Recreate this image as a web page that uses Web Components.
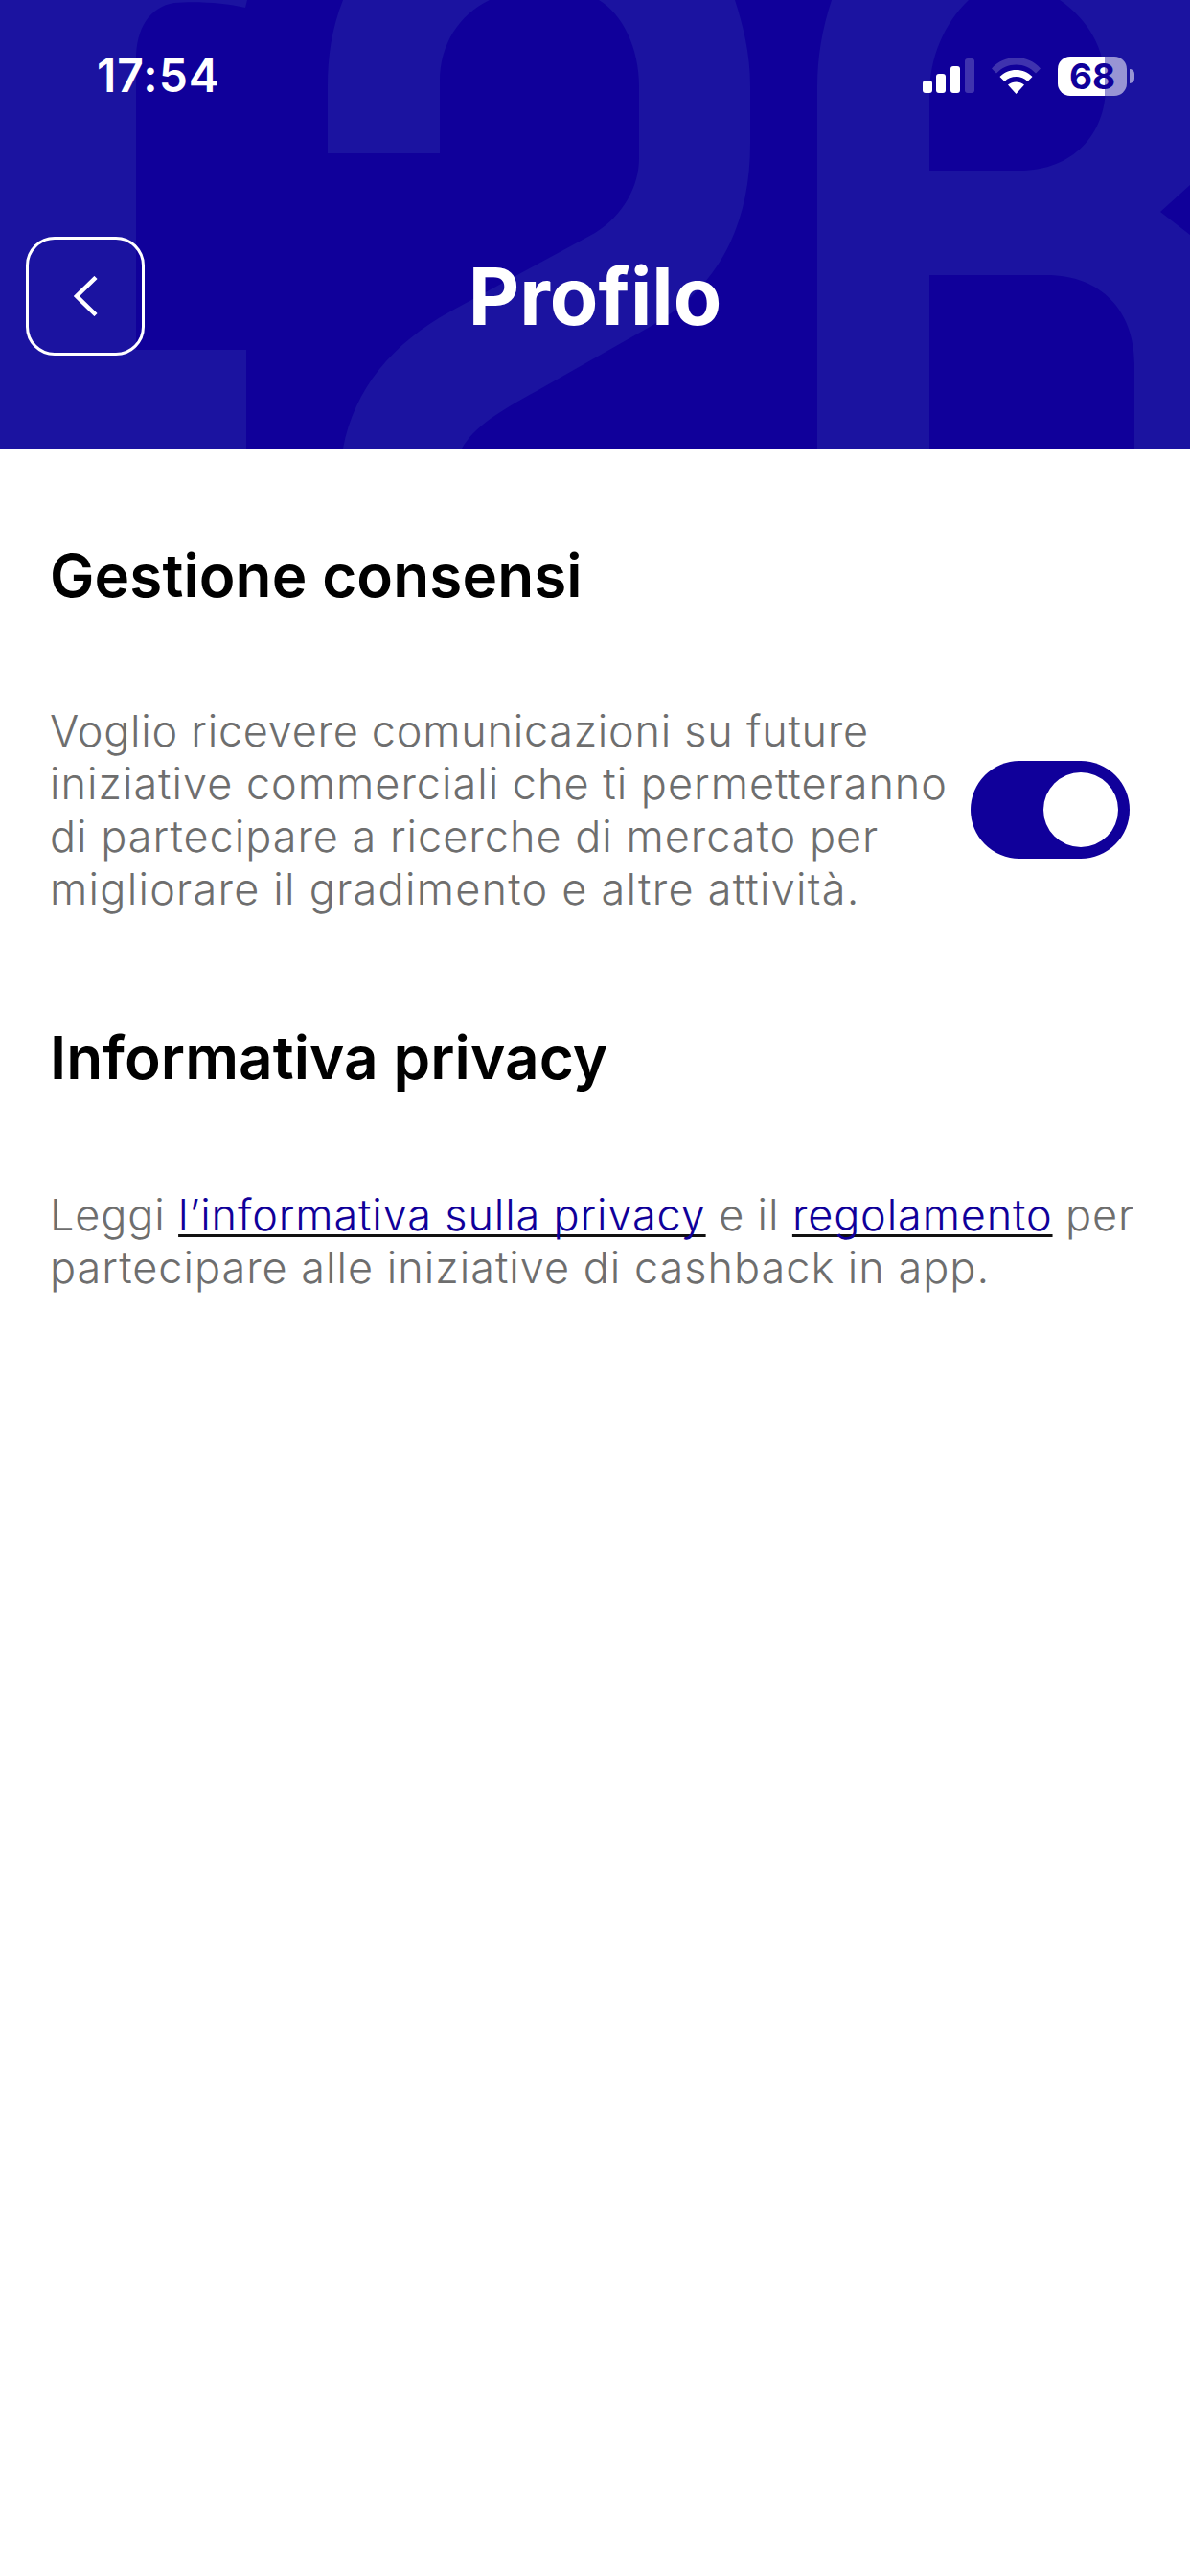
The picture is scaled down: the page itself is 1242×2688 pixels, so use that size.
<!DOCTYPE html>
<html lang="it"><head><meta charset="utf-8"><title>Profilo</title>
<style>
html,body{margin:0;padding:0;background:#fff}
body{font-family:Inter,"Noto Sans",sans-serif;width:1242px;min-height:2688px}
</style></head><body>
<profile-page></profile-page>
<template id="t-status">
<style>
:host{display:flex;align-items:center;justify-content:space-between;height:40px;padding:59px 58px 0 101px;color:#fff}
.time{font:600 48px/40px Inter,sans-serif;letter-spacing:1px}
.icons{display:flex;align-items:center;gap:18px}
svg{display:block}
.batt{position:relative;width:72px;height:41px;border-radius:13px;background:linear-gradient(90deg,#fff 0 49px,rgba(255,255,255,.55) 49px);color:#10009a;font:700 37px/41px Inter,sans-serif;text-align:center;margin-right:8px}
.batt::after{content:"";position:absolute;left:75px;top:13px;width:5px;height:15px;border-radius:0 8px 8px 0;background:rgba(255,255,255,.55)}
</style>
<span class="time">17:54</span>
<span class="icons">
<svg width="54" height="36" viewBox="0 0 54 36" fill="#fff"><rect x="0" y="23" width="10" height="13" rx="3"/><rect x="14" y="16" width="10" height="20" rx="3"/><rect x="29" y="8" width="10" height="28" rx="3"/><rect x="44" y="0" width="10" height="36" rx="3" opacity=".2"/></svg>
<svg width="51" height="38" viewBox="0 0 51 38" fill="#fff"><path opacity=".2" d="M0 11.500C6.500 4 15.500 0 25.500 0S44.500 4 51 11.500L46 16.500C40.500 10.500 33.500 7.500 25.500 7.500S10.500 10.500 5 16.500Z"/><path d="M8.500 20C13 15.500 19 13 25.500 13S38 15.500 42.500 20L37.500 25C34.500 21.800 30 20 25.500 20S16.500 21.800 13.500 25Z"/><path d="M17 28.500C19.500 26.500 22.500 25.500 25.500 25.500S31.500 26.500 34 28.500L25.500 38Z"/></svg>
<span class="batt">68</span>
</span>
</template>
<template id="t-header">
<style>
:host{display:block;position:relative;height:468px;background:#10009a;overflow:hidden}
.bg{position:absolute;inset:0}
.bar{position:relative;display:flex;align-items:center;justify-content:center;height:124px;margin-top:148px;padding:0 27px}
h1{margin:0;font:700 82.500px/124px Inter,sans-serif;color:#fff;letter-spacing:0}
</style>
<svg class="bg" width="1242" height="468" viewBox="0 0 1242 468" fill="#1b13a0">
<path d="M0 0H258L256 8C235 3 205 1 182 3C156 7 142 30 142 62V365H257V468H0Z"/>
<path d="M358 0C346 30 342 60 342 90V160H459V85C459 45 480 15 511 0H625C650 15 667 50 667 90V165C667 195 650 225 621 243L470 325C410 358 370 405 358 468H482C495 445 520 430 560 408L680 340C750 300 783 235 783 150V90C783 55 775 25 767 0Z"/>
<path d="M868 0C858 30 853 60 853 90V468H970V287H1092C1150 287 1184 325 1184 380V468H1242V245L1211 221L1242 193V0H1106C1135 20 1154 50 1154 90C1154 140 1120 178 1064 178H970V100C970 60 985 25 1011 0Z"/>
</svg>
<status-bar style="position:relative"></status-bar>
<div class="bar"><slot name="back"></slot><h1><slot></slot></h1></div>
</template>
<template id="t-back">
<style>
:host{display:block;position:absolute;left:27px;top:0;width:124px;height:124px;box-sizing:border-box;border:3px solid #fff;border-radius:30px}
svg{display:block;position:absolute;left:47px;top:38px}
</style>
<svg width="25" height="42" viewBox="0 0 25 42" fill="none" stroke="#fff" stroke-width="4.500"><path d="M23 1.500L3 21L23 40.500"/></svg>
</template>
<template id="t-section">
<style>
:host{display:block;padding:0 52px}
h2{margin:0;font:600 62px/72px Inter,sans-serif;color:#000;letter-spacing:.1px}
</style>
<h2><slot name="title"></slot></h2>
<slot></slot>
</template>
<template id="t-toggle">
<style>
:host{display:flex;flex:none;justify-content:flex-end;align-items:center;box-sizing:border-box;width:166px;height:102px;padding-right:12px;border-radius:51px;background:#10009a}
i{display:block;width:78px;height:78px;border-radius:50%;background:#fff}
</style>
<i></i>
</template>
<template id="t-text">
<style>
:host{display:block;font:300 45px/55px Inter,sans-serif;color:#6e6e6e;letter-spacing:1px}
</style>
<slot></slot>
</template>
<template id="t-page">
<style>
:host{display:block}
main{display:flex;flex-direction:column}
profile-section.one{margin-top:97px}
profile-section.two{margin-top:113px}
.row{display:flex;align-items:center;justify-content:space-between;margin-top:98px;margin-right:11px;gap:10px}
.row>body-text{width:950px;white-space:nowrap}
.note{display:block;margin-top:100px;white-space:nowrap}
a{color:#10009a;text-decoration:underline;text-decoration-color:#111;text-decoration-thickness:3px;text-underline-offset:4px;text-decoration-skip-ink:none}
.tight{letter-spacing:.74px}
.tight2{letter-spacing:.87px}
.wide{letter-spacing:1.25px}
</style>
<page-header>Profilo<back-button slot="back"></back-button></page-header>
<main>
<profile-section class="one"><span slot="title">Gestione consensi</span>
<div class="row"><body-text><span class="tight">Voglio ricevere comunicazioni su future</span><br>iniziative commerciali che ti permetteranno<br>di partecipare a ricerche di mercato per<br><span class="wide">migliorare il gradimento e altre attività.</span></body-text><toggle-switch></toggle-switch></div>
</profile-section>
<profile-section class="two"><span slot="title">Informativa privacy</span>
<body-text class="note"><span class="tight2">Leggi <a href="#">l’informativa sulla privacy</a> e il <a href="#">regolamento</a> per</span><br>partecipare alle iniziative di cashback in app.</body-text>
</profile-section>
</main>
</template>
<script>
function reg(tag,tid){customElements.define(tag,class extends HTMLElement{constructor(){super();this.attachShadow({mode:'open'}).appendChild(document.getElementById(tid).content.cloneNode(true));}});}
reg('status-bar','t-status');reg('back-button','t-back');reg('toggle-switch','t-toggle');reg('body-text','t-text');reg('profile-section','t-section');reg('page-header','t-header');reg('profile-page','t-page');
</script>
</body></html>
